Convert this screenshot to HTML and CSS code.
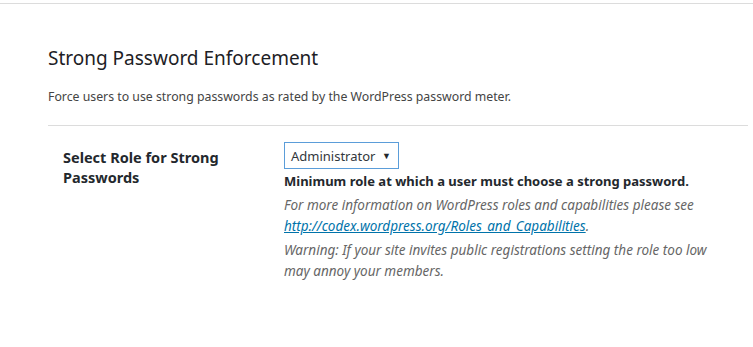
FILE: index.html
```html
<!DOCTYPE html>
<html lang="en">
<head>
    <meta charset="UTF-8">
    <meta name="viewport" content="width=device-width, initial-scale=1.0">
    <title>Strong Password Enforcement</title>
    <link rel="stylesheet" href="styles.css">
</head>
<body>
    <div id="page">
        <div id="module">
            <h2 class="titre">Strong Password Enforcement</h2>
            <p class="intro">Force users to use strong passwords as rated by the WordPress password meter.</p>

            <div class="ligne">
                <div class="label">Select Role for Strong Passwords</div>
                <div class="champ">
                    <div class="select">
                        <span>Administrator</span>
                        <span class="fleche">&#9660;</span>
                    </div>
                    <p class="aide-forte">Minimum role at which a user must choose a strong password.</p>
                    <p class="aide">For more information on WordPress roles and capabilities please see <a href="#">http://codex.wordpress.org/Roles_and_Capabilities</a>.</p>
                    <p class="aide">Warning: If your site invites public registrations setting the role too low may annoy your members.</p>
                </div>
            </div>
        </div>
    </div>
</body>
</html>
```
FILE: styles.css
```css
body{
    margin: 0;
    background: #fff;
    font-family: "Noto Sans", "Open Sans", sans-serif;
    color: #23282d;
}

#page{
    margin-top: 3px;
    border-top: 1px solid #dcdcdc;
    padding: 0 5px 0 48px;
}

.titre{
    margin: 0;
    padding-top: 41px;
    font-size: 19px;
    font-weight: normal;
    line-height: 26px;
    color: #1d2125;
}

.intro{
    margin: 16px 0 0 0;
    font-size: 12.3px;
    line-height: 20px;
    color: #444;
}

.ligne{
    margin-top: 18px;
    border-top: 1px solid #dcdcdc;
    padding: 16px 0 0 15px;
    display: grid;
    grid-template-columns: 221px 1fr;
}

.label{
    font-size: 14.5px;
    font-weight: bold;
    line-height: 20px;
    width: 175px;
    margin-top: 5px;
}

.select{
    width: 115px;
    height: 27px;
    box-sizing: border-box;
    border: 1px solid #5b9dd9;
    display: flex;
    align-items: center;
    justify-content: space-between;
    padding: 0 7px 0 6px;
    font-size: 13px;
    color: #32373c;
}

.fleche{
    font-size: 9px;
    color: #23282d;
}

.aide-forte{
    margin: 2px 0 0 0;
    font-size: 13px;
    font-weight: bold;
    line-height: 21px;
}

.aide{
    margin: 3px 0 0 0;
    font-size: 13.5px;
    font-style: italic;
    line-height: 21px;
    color: #666;
    max-width: 436px;
}

.aide a{
    color: #0073aa;
}
```
